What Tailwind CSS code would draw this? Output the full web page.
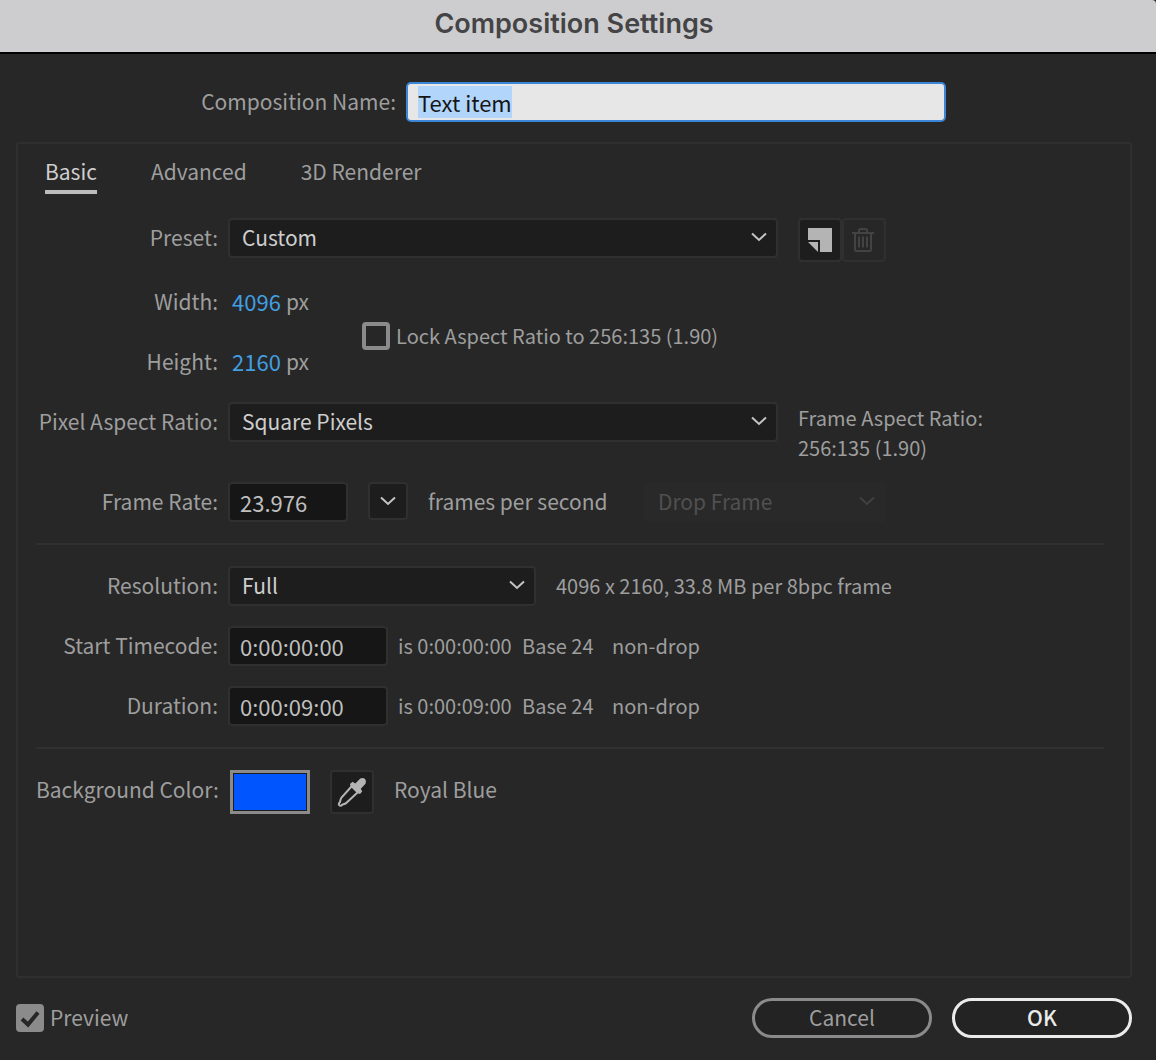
<!DOCTYPE html>
<html lang="en">
<head>
    <meta charset="UTF-8">
    <meta name="viewport" content="width=device-width, initial-scale=1.0">
    <title>Composition Settings</title>
    <script src="https://cdn.jsdelivr.net/npm/@tailwindcss/browser@4"></script>
</head>
<body class="min-h-screen flex flex-col bg-[#272727] text-[#9e9e9e] text-[21px] leading-[30px] font-['Noto_Sans_CJK_SC',sans-serif]">
    <header class="h-[54px] pb-1 flex items-center justify-center bg-[#cdcdcf] border-b-2 border-black rounded-tr-sm">
        <h1 class="pr-2 text-[27px] font-semibold text-[#444446] font-['Inter',sans-serif]">Composition Settings</h1>
    </header>

    <form id="settings" class="flex-1 flex flex-col pl-4 pr-6 pt-7 pb-[22px]">
        <div class="flex items-center pl-[184px] mb-5">
            <label for="name" class="w-[196px] pb-0.5 text-right whitespace-nowrap">Composition Name:</label>
            <input type="text" id="name" value="Text item" autofocus
                   class="ml-[10px] w-[540px] h-10 px-[10px] rounded-[5px] border-2 border-[#3b86d6] bg-[#e7e7e7] text-[22px] text-[#151515] outline-none selection:bg-[#b1d5fb] selection:text-[#151515]">
        </div>

        <main class="flex-1 border-2 border-[#2f2f2f] rounded-[3px] pl-[18px] pr-[26px]">
            <nav class="flex gap-[54px] pl-[9px] h-[74px] pt-3 items-start">
                <a href="#basic" class="border-b-4 border-[#bdbdbd] pb-1 text-[#cecece]">Basic</a>
                <a href="#advanced">Advanced</a>
                <a href="#renderer">3D Renderer</a>
            </nav>

            <!-- Preset -->
            <div class="flex h-10">
                <label for="preset" class="w-[182px] pt-1 text-right whitespace-nowrap">Preset:</label>
                <div class="relative ml-[10px] w-[550px]">
                    <select id="preset" class="appearance-none w-full h-10 pl-3 pb-0.5 rounded-[4px] border-2 border-[#303030] bg-[#1d1d1d] text-[#cecece]">
                        <option>Custom</option>
                    </select>
                    <svg class="absolute right-[11px] top-[14px] w-4 h-[10px] pointer-events-none" viewBox="0 0 16 10" fill="none" stroke="#c4c4c4" stroke-width="2"><path d="M1 1.5l7 6.5 7-6.5"/></svg>
                </div>
                <button type="button" aria-label="New preset" class="ml-5 w-11 h-11 flex items-center justify-center rounded-[4px] border-2 border-[#303030] bg-[#1d1d1d]">
                    <svg class="w-6 h-6" viewBox="0 0 24 24" fill="#b4b4b4"><path d="M0 0h24v24H12V12H0z"/><path d="M0 14h10v10z"/></svg>
                </button>
                <button type="button" aria-label="Delete preset" disabled class="w-11 h-11 pr-0.5 flex items-center justify-center rounded-[4px] border-2 border-[#303030]">
                    <svg class="w-[22px] h-6" viewBox="0 0 22 24" fill="none" stroke="#434343" stroke-width="2"><path d="M0 5h22M7 5V2.5Q7 1 8.500 1h5Q15 1 15 2.500V5M3 5v16.500Q3 23 4.500 23h13q1.500 0 1.500-1.500V5M7 8.500v11M11 8.500v11M15 8.500v11"/></svg>
                </button>
            </div>

            <!-- Frame size -->
            <div class="flex items-center my-[22px]">
                <div>
                    <div class="flex items-center h-[42px] mb-[18px]">
                        <label for="width" class="w-[182px] text-right">Width:</label>
                        <input type="text" id="width" value="4096" class="ml-[14px] w-[50px] text-[22px] text-[#419fe2] outline-none">
                        <span class="ml-1">px</span>
                    </div>
                    <div class="flex items-center h-[42px]">
                        <label for="height" class="w-[182px] text-right">Height:</label>
                        <input type="text" id="height" value="2160" class="ml-[14px] w-[50px] text-[22px] text-[#419fe2] outline-none">
                        <span class="ml-1">px</span>
                    </div>
                </div>
                <div class="flex items-center ml-[53px] mt-[10px] h-7 text-[20px]">
                    <input type="checkbox" id="lock" class="appearance-none w-7 h-7 rounded-[4px] border-4 border-[#8b8b8b]">
                    <label for="lock" class="ml-1.5">Lock Aspect Ratio to 256:135 (1.90)</label>
                </div>
            </div>

            <!-- Pixel aspect ratio -->
            <div class="flex h-10 -mt-0.5">
                <label for="par" class="w-[182px] pt-1 text-right whitespace-nowrap">Pixel Aspect Ratio:</label>
                <div class="relative ml-[10px] w-[550px]">
                    <select id="par" class="appearance-none w-full h-10 pl-3 pb-0.5 rounded-[4px] border-2 border-[#303030] bg-[#1d1d1d] text-[#cecece]">
                        <option>Square Pixels</option>
                    </select>
                    <svg class="absolute right-[11px] top-[14px] w-4 h-[10px] pointer-events-none" viewBox="0 0 16 10" fill="none" stroke="#c4c4c4" stroke-width="2"><path d="M1 1.5l7 6.5 7-6.5"/></svg>
                </div>
                <p class="ml-5 pt-px text-[20px]">Frame Aspect Ratio:<br>256:135 (1.90)</p>
            </div>

            <!-- Frame rate -->
            <div class="flex h-10 mt-10">
                <label for="rate" class="w-[182px] pt-1 text-right whitespace-nowrap">Frame Rate:</label>
                <input type="text" id="rate" value="23.976" class="ml-[10px] w-[120px] h-10 px-[10px] rounded-[4px] border-2 border-[#303030] bg-[#161616] text-[22px] text-[#bfbfbf]">
                <button type="button" aria-label="Frame rates" class="ml-5 w-10 h-[38px] flex items-center justify-center rounded-[4px] border-2 border-[#303030] bg-[#1d1d1d]">
                    <svg class="w-4 h-[10px]" viewBox="0 0 16 10" fill="none" stroke="#c4c4c4" stroke-width="2"><path d="M1 1.5l7 6.5 7-6.5"/></svg>
                </button>
                <span class="ml-5 w-[180px] pt-1 whitespace-nowrap">frames per second</span>
                <div class="relative ml-9 w-[242px]">
                    <select id="drop" aria-label="Drop frame" disabled class="appearance-none w-full h-10 pl-[14px] pb-0.5 rounded-[4px] bg-[#292929] text-[#505050] opacity-100">
                        <option>Drop Frame</option>
                    </select>
                    <svg class="absolute right-[11px] top-[14px] w-4 h-[10px] pointer-events-none" viewBox="0 0 16 10" fill="none" stroke="#414141" stroke-width="2"><path d="M1 1.5l7 6.5 7-6.5"/></svg>
                </div>
            </div>

            <hr class="my-[21px] border-t-2 border-[#303030]">

            <!-- Resolution -->
            <div class="flex h-10">
                <label for="resolution" class="w-[182px] pt-1 text-right whitespace-nowrap">Resolution:</label>
                <div class="relative ml-[10px] w-[308px]">
                    <select id="resolution" class="appearance-none w-full h-10 pl-3 pb-0.5 rounded-[4px] border-2 border-[#303030] bg-[#1d1d1d] text-[#cecece]">
                        <option>Full</option>
                    </select>
                    <svg class="absolute right-[11px] top-[14px] w-4 h-[10px] pointer-events-none" viewBox="0 0 16 10" fill="none" stroke="#c4c4c4" stroke-width="2"><path d="M1 1.5l7 6.5 7-6.5"/></svg>
                </div>
                <span class="ml-5 pt-[5px] text-[20px]">4096 x 2160, 33.8 MB per 8bpc frame</span>
            </div>

            <!-- Timecodes -->
            <div class="flex h-10 mt-5">
                <label for="start" class="w-[182px] pt-1 text-right whitespace-nowrap">Start Timecode:</label>
                <input type="text" id="start" value="0:00:00:00" class="ml-[10px] w-[160px] h-10 px-[10px] rounded-[4px] border-2 border-[#303030] bg-[#161616] text-[22px] text-[#bfbfbf]">
                <div class="flex ml-[10px] pt-[5px] text-[20px]">
                    <span class="w-[124px]">is 0:00:00:00</span>
                    <span class="w-[90px]">Base 24</span>
                    <span>non-drop</span>
                </div>
            </div>
            <div class="flex h-10 mt-5">
                <label for="duration" class="w-[182px] pt-1 text-right whitespace-nowrap">Duration:</label>
                <input type="text" id="duration" value="0:00:09:00" class="ml-[10px] w-[160px] h-10 px-[10px] rounded-[4px] border-2 border-[#303030] bg-[#161616] text-[22px] text-[#bfbfbf]">
                <div class="flex ml-[10px] pt-[5px] text-[20px]">
                    <span class="w-[124px]">is 0:00:09:00</span>
                    <span class="w-[90px]">Base 24</span>
                    <span>non-drop</span>
                </div>
            </div>

            <hr class="my-[21px] border-t-2 border-[#303030]">

            <!-- Background color -->
            <div class="flex h-11">
                <span class="w-[182px] pt-1 text-right whitespace-nowrap">Background Color:</span>
                <button type="button" aria-label="Background color" class="ml-3 w-20 h-11 border-3 border-[#8b8b8b] p-px bg-[#1d1d1d]">
                    <span class="block w-full h-full bg-[#0055ff]"></span>
                </button>
                <button type="button" aria-label="Pick color" class="ml-5 w-11 h-11 flex items-center justify-center rounded-[4px] border-2 border-[#303030] bg-[#1d1d1d]">
                    <svg class="w-[30px] h-[30px]" viewBox="0 0 30 30">
                        <path d="M14.500 9.500L4.500 20.500Q3.500 22 3 25Q1 27 2.300 28.200Q3.600 29.500 5.600 27.500Q8.500 27 9.800 25.500L20.500 15.500" fill="none" stroke="#b4b4b4" stroke-width="2"/>
                        <path d="M13 7l2.500-2.200 2.800 1.700L23.300 1.600Q26 .2 28 2Q29.900 4 28.500 6.700L23.800 11.800l1.400 2.800L23 17l-3-1-6.500-6.500z" fill="#b4b4b4"/>
                    </svg>
                </button>
                <span class="ml-5 pt-1">Royal Blue</span>
            </div>
        </main>

        <footer class="flex items-center mt-5">
            <span class="relative w-7 h-7">
                <input type="checkbox" id="preview" checked class="appearance-none block w-7 h-7 rounded-[4px] bg-[#8b8b8b]">
                <svg class="absolute inset-0 w-7 h-7 pointer-events-none" viewBox="0 0 28 28" fill="none" stroke="#272727" stroke-width="4"><path d="M6 15l6 5.500L22 8.500"/></svg>
            </span>
            <label for="preview" class="ml-1.5 pb-0.5 flex-1">Preview</label>
            <button type="button" class="w-[180px] h-10 pb-0.5 rounded-full border-3 border-[#8b8b8b] bg-[#232323]">Cancel</button>
            <button type="submit" class="ml-5 w-[180px] h-10 pb-0.5 rounded-full border-3 border-[#ebebeb] bg-[#232323] text-[#ebebeb] font-medium">OK</button>
        </footer>
    </form>

    <script>
        const nameInput = document.getElementById('name');
        nameInput.focus();
        nameInput.select();

        document.getElementById('settings').addEventListener('submit', function(e) {
            e.preventDefault();
        });
    </script>
</body>
</html>
